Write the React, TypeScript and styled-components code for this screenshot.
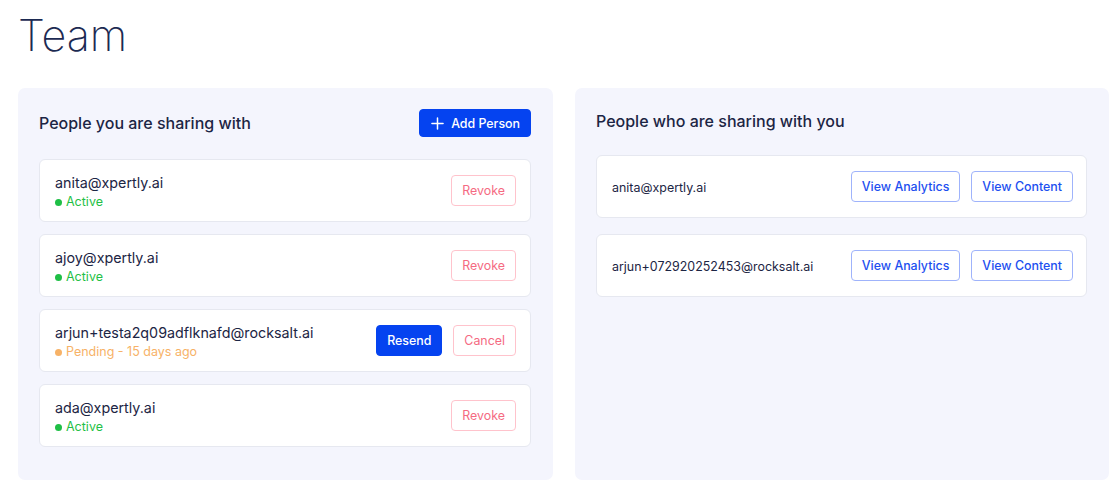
import React from "react";
import styled, { createGlobalStyle } from "styled-components";

const Global = createGlobalStyle`
  html, body { margin: 0; padding: 0; background: #ffffff; }
  body { font-family: Inter, "Noto Sans", sans-serif; color: #1c2544; }
  * { box-sizing: border-box; }
`;

const Page = styled.div`
  padding: 7px 11px 0 18px;
  width: 1120px;
`;

const Title = styled.h1`
  margin: 0;
  font-size: 43px;
  font-weight: 200;
  line-height: 56px;
  color: #1c2a52;
`;

const Columns = styled.div`
  display: grid;
  grid-template-columns: 535px 534px;
  gap: 22px;
  margin-top: 25px;
  align-items: stretch;
`;

const Panel = styled.section`
  background: #f4f5fd;
  border-radius: 7px;
  padding: 21px 22px 32px 21px;
  min-height: 392px;
`;

const PanelHeader = styled.div<{ $tall?: boolean }>`
  display: flex;
  align-items: center;
  justify-content: space-between;
  height: ${(p) => (p.$tall ? "28px" : "24px")};
  margin-bottom: 22px;
`;

const PanelTitle = styled.h2`
  margin: 0;
  font-size: 16px;
  font-weight: 500;
  color: #1c2544;
`;

const List = styled.div<{ $gap: number }>`
  display: flex;
  flex-direction: column;
  gap: ${(p) => p.$gap}px;
`;

const Card = styled.div<{ $right?: number }>`
  background: #ffffff;
  border: 1px solid #e6e8f0;
  border-radius: 6px;
  height: 63px;
  padding: 0 ${(p) => p.$right ?? 14}px 0 15px;
  display: flex;
  align-items: center;
  justify-content: space-between;
`;

const Info = styled.div`
  display: flex;
  flex-direction: column;
  gap: 1px;
  padding-top: 3px;
`;

const Email = styled.div<{ $small?: boolean }>`
  font-size: ${(p) => (p.$small ? "12.45px" : "14.3px")};
  color: #1c2544;
  line-height: 19px;
  padding-top: ${(p) => (p.$small ? "2px" : "0")};
`;

const Status = styled.div<{ $color: string }>`
  display: flex;
  align-items: center;
  gap: 4px;
  font-size: 12.5px;
  line-height: 18px;
  color: ${(p) => p.$color};
  &::before {
    content: "";
    width: 7px;
    height: 7px;
    border-radius: 50%;
    background: ${(p) => p.$color};
  }
`;

const Actions = styled.div`
  display: flex;
  gap: 11px;
  align-items: center;
`;

const Button = styled.button<{ $variant: "primary" | "danger" | "outline" }>`
  font-family: Inter, "Noto Sans", sans-serif;
  font-size: 12.4px;
  font-weight: 500;
  height: 31px;
  padding: 0 10px;
  border-radius: 4px;
  cursor: pointer;
  display: inline-flex;
  align-items: center;
  justify-content: center;
  gap: 7px;
  ${(p) =>
    p.$variant === "primary"
      ? `background:#0543f0; color:#ffffff; border:1px solid #0543f0;`
      : p.$variant === "danger"
      ? `background:#ffffff; color:#f56a82; border:1px solid #ffc3cc; font-weight:400;`
      : `background:#ffffff; color:#1d4ff0; border:1px solid #9fb3fb; font-weight:500;`}
`;

const AddButton = styled(Button)`
  height: 28px;
  padding: 0 10px 0 11px;
`;

const sharing = [
  { email: "anita@xpertly.ai", status: "Active" },
  { email: "ajoy@xpertly.ai", status: "Active" },
  { email: "arjun+testa2q09adflknafd@rocksalt.ai", status: "Pending - 15 days ago", pending: true },
  { email: "ada@xpertly.ai", status: "Active" },
];

const sharedWith = ["anita@xpertly.ai", "arjun+072920252453@rocksalt.ai"];

export default function App() {
  return (
    <>
      <Global />
      <Page>
        <Title>Team</Title>
        <Columns>
          <Panel>
            <PanelHeader $tall>
              <PanelTitle>People you are sharing with</PanelTitle>
              <AddButton $variant="primary">
                <svg width="13" height="13" viewBox="0 0 14 14" fill="none">
                  <path d="M7 1v12M1 7h12" stroke="#fff" strokeWidth="1.6" strokeLinecap="round" />
                </svg>
                Add Person
              </AddButton>
            </PanelHeader>
            <List $gap={12}>
              {sharing.map((s) => (
                <Card key={s.email}>
                  <Info>
                    <Email>{s.email}</Email>
                    <Status $color={s.pending ? "#f7b267" : "#1fbf46"}>{s.status}</Status>
                  </Info>
                  <Actions>
                    {s.pending ? (
                      <>
                        <Button $variant="primary">Resend</Button>
                        <Button $variant="danger">Cancel</Button>
                      </>
                    ) : (
                      <Button $variant="danger">Revoke</Button>
                    )}
                  </Actions>
                </Card>
              ))}
            </List>
          </Panel>
          <Panel>
            <PanelHeader>
              <PanelTitle>People who are sharing with you</PanelTitle>
            </PanelHeader>
            <List $gap={16}>
              {sharedWith.map((e) => (
                <Card key={e} $right={13}>
                  <Email $small>{e}</Email>
                  <Actions>
                    <Button $variant="outline">View Analytics</Button>
                    <Button $variant="outline">View Content</Button>
                  </Actions>
                </Card>
              ))}
            </List>
          </Panel>
        </Columns>
      </Page>
    </>
  );
}
